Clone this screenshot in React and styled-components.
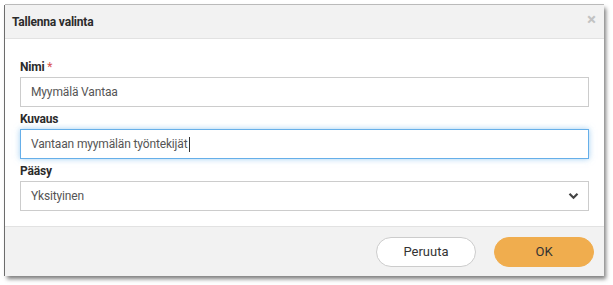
import styled, { createGlobalStyle } from "styled-components";

const GlobalStyle = createGlobalStyle`
  body {
    margin: 0;
    background: #ffffff;
    font-family: Roboto, "Liberation Sans", sans-serif;
  }
`;

const Page = styled.div`
  padding: 5px 9px 9px 5px;
`;

const Dialog = styled.div`
  width: 599px;
  background: #ffffff;
  box-shadow: -1px 0 0 rgba(0, 0, 0, 0.55), 0 -1px 0 rgba(0, 0, 0, 0.25),
    2px 3px 4px rgba(0, 0, 0, 0.5);
  display: flex;
  flex-direction: column;
`;

const Header = styled.div`
  height: 34px;
  box-sizing: border-box;
  display: flex;
  align-items: center;
  justify-content: space-between;
  padding: 0 8px 0 7px;
  background: #f2f2f2;
  border-bottom: 1px solid #e2e2e2;
`;

const Title = styled.h4`
  margin: 0;
  font-size: 12px;
  font-weight: 700;
  color: #2b2b2b;
  letter-spacing: -0.2px;
`;

const Close = styled.span`
  font-size: 17px;
  font-weight: 700;
  color: #c2c2c2;
  line-height: 1;
  margin-top: -5px;
`;

const Body = styled.div`
  padding: 21px 15px 15px 15px;
  display: flex;
  flex-direction: column;
`;

const Label = styled.label`
  display: block;
  font-size: 12px;
  font-weight: 700;
  color: #2b2b2b;
  line-height: 15px;
  margin: ${(p) => (p.first ? "0" : "5px")} 0 2px 0;
  letter-spacing: -0.2px;
`;

const Required = styled.span`
  color: #d9534f;
  font-weight: 400;
`;

const Field = styled.div`
  height: 30px;
  box-sizing: border-box;
  display: flex;
  align-items: center;
  padding: 0 10px;
  font-size: 12px;
  color: #555555;
  background: #ffffff;
  border: 1px solid ${(p) => (p.focused ? "#66afe9" : "#cccccc")};
  box-shadow: ${(p) =>
    p.focused ? "0 0 6px rgba(102, 175, 233, 0.6)" : "none"};
  letter-spacing: -0.15px;
`;

const Caret = styled.span`
  display: inline-block;
  width: 1px;
  height: 15px;
  margin-left: 1px;
  background: #333333;
`;

const Chevron = styled.svg`
  margin-left: auto;
  margin-right: -1px;
`;

const Footer = styled.div`
  height: 50px;
  box-sizing: border-box;
  display: flex;
  align-items: center;
  justify-content: flex-end;
  gap: 18px;
  padding: 0 10px;
  background: #f2f2f2;
  border-top: 1px solid #e2e2e2;
`;

const Button = styled.button`
  width: 100px;
  height: 30px;
  border-radius: 15px;
  font-family: Roboto, "Liberation Sans", sans-serif;
  font-size: 13px;
  color: #333333;
  cursor: pointer;
  background: ${(p) => (p.primary ? "#f0ad4e" : "#ffffff")};
  border: 1px solid ${(p) => (p.primary ? "#f0ad4e" : "#cccccc")};
`;

export default function App() {
  return (
    <>
      <GlobalStyle />
      <Page>
        <Dialog>
          <Header>
            <Title>Tallenna valinta</Title>
            <Close>×</Close>
          </Header>
          <Body>
            <Label first>
              Nimi <Required>*</Required>
            </Label>
            <Field>Myymälä Vantaa</Field>
            <Label>Kuvaus</Label>
            <Field focused>
              Vantaan myymälän työntekijät
              <Caret />
            </Field>
            <Label>Pääsy</Label>
            <Field>
              Yksityinen
              <Chevron width="11" height="8" viewBox="0 0 11 8">
                <path
                  d="M1.5 1.8 L5.5 5.8 L9.5 1.8"
                  fill="none"
                  stroke="#444444"
                  strokeWidth="2.2"
                />
              </Chevron>
            </Field>
          </Body>
          <Footer>
            <Button>Peruuta</Button>
            <Button primary>OK</Button>
          </Footer>
        </Dialog>
      </Page>
    </>
  );
}
